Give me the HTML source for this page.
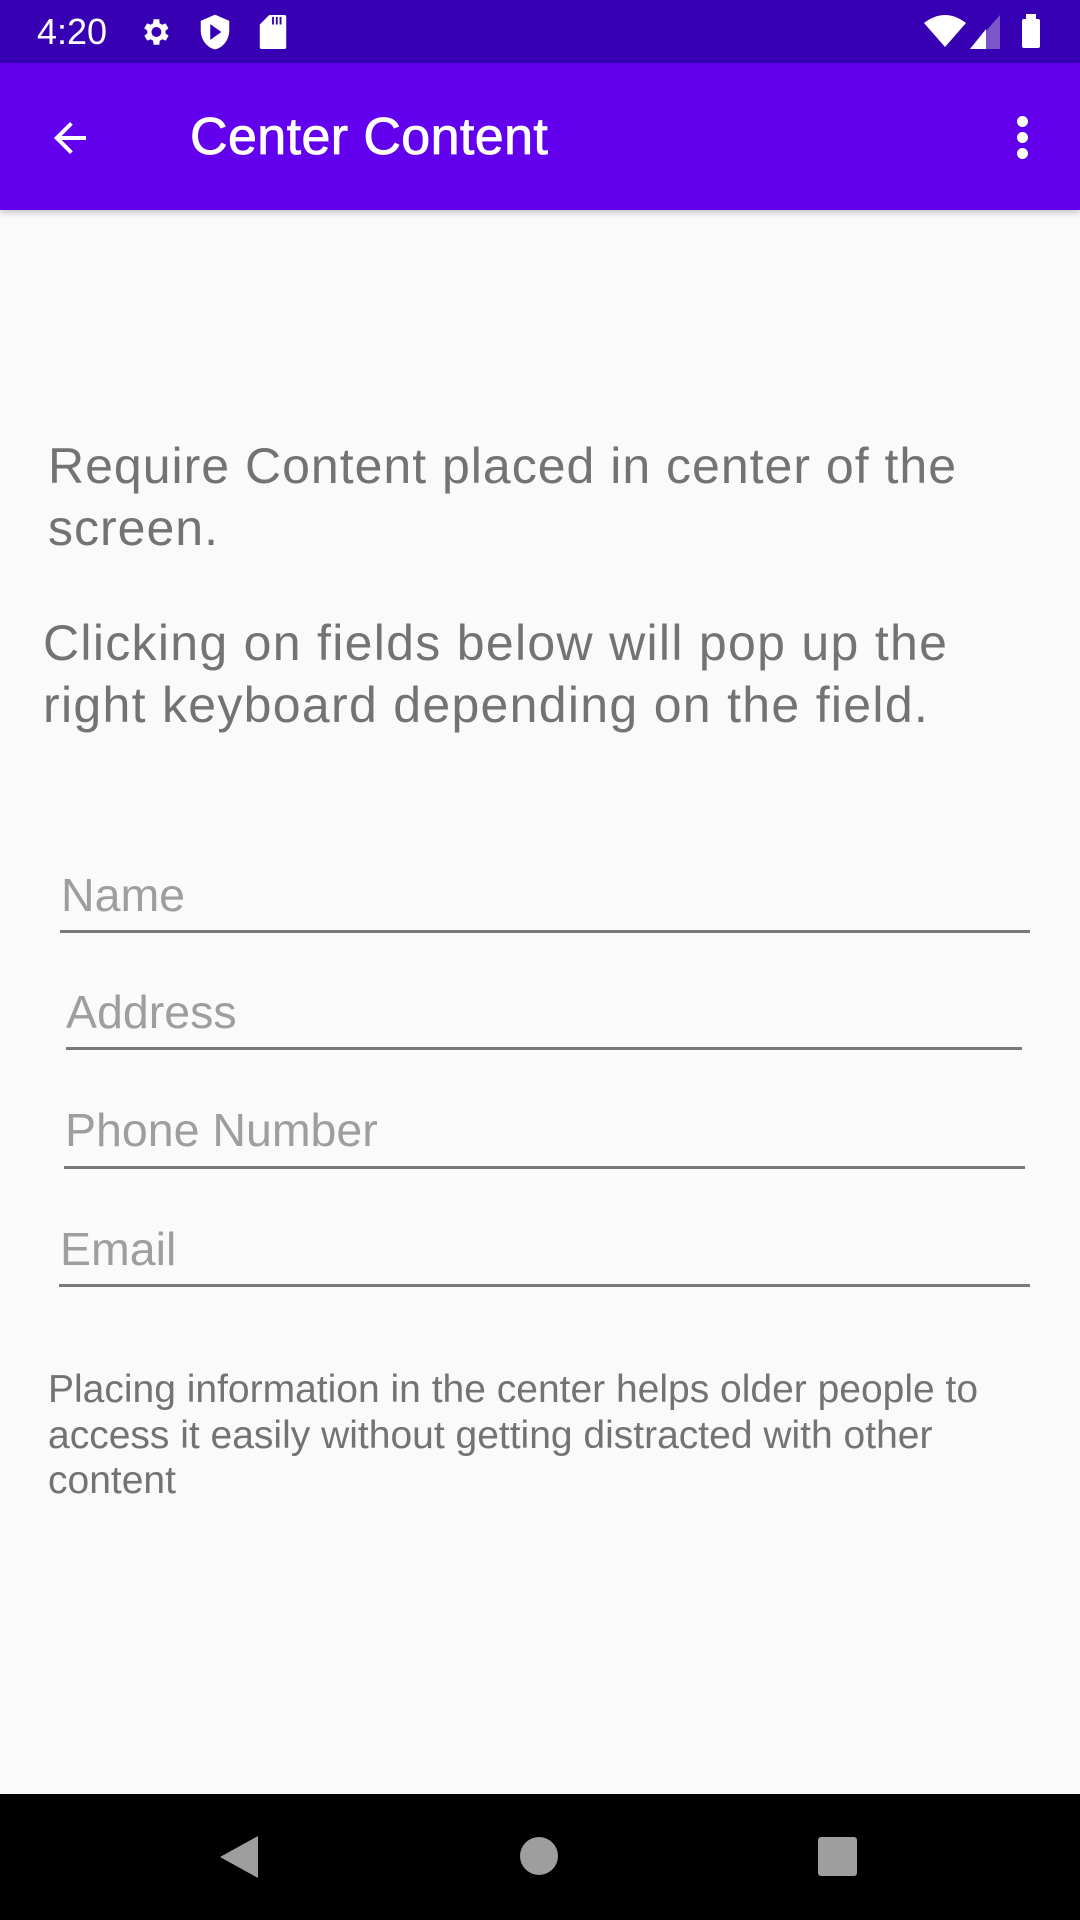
<!DOCTYPE html>
<html><head><meta charset="utf-8"><style>
*{margin:0;padding:0;box-sizing:border-box}
body{width:1080px;height:1920px;background:#fafafa;font-family:"Liberation Sans",Roboto,sans-serif;position:relative;overflow:hidden}
.abs{position:absolute}
.status{top:0;left:0;width:1080px;height:63px;background:#3700B3}
.bar{top:63px;left:0;width:1080px;height:147px;background:#6200EE;box-shadow:0 3px 6px rgba(0,0,0,.2)}
.t{color:#737373;white-space:nowrap}
.hint{color:#9e9e9e;font-size:46.5px;white-space:nowrap}
.line{height:3px;background:#7a7a7a}
.nav{top:1794px;left:0;width:1080px;height:126px;background:#000}
</style></head><body>
<div class="abs status"></div>
<div class="abs" style="left:37px;top:11px;color:#fff;font-size:36px;">4:20</div>
<svg class="abs" style="left:138px;top:15px" width="34" height="34" viewBox="0 0 24 24"><path fill="#fff" d="M19.4 13a7.5 7.5 0 000-2l2.1-1.6-2-3.5-2.5 1a7 7 0 00-1.7-1L15 3h-4l-.4 2.9a7 7 0 00-1.7 1l-2.5-1-2 3.5L6.6 11a7.5 7.5 0 000 2l-2.1 1.6 2 3.5 2.5-1a7 7 0 001.7 1L11 21h4l.4-2.9a7 7 0 001.7-1l2.5 1 2-3.5zM13 15.5a3.5 3.5 0 110-7 3.5 3.5 0 010 7z"/></svg>
<svg class="abs" style="left:199px;top:13px" width="32" height="38" viewBox="0 0 20 24"><path fill="#fff" d="M10 1L1 5v6c0 6 4 11 9 12 5-1 9-6 9-12V5z"/><path fill="#3700B3" d="M7 7v10l7-5z"/></svg>
<svg class="abs" style="left:259px;top:15px" width="28" height="34" viewBox="0 0 14 18"><path fill="#fff" d="M5 0h8a1 1 0 011 1v16a1 1 0 01-1 1H1a1 1 0 01-1-1V5z"/><path stroke="#3700B3" stroke-width="1" d="M7 1v4M9 1v4M11 1v4"/></svg>
<svg class="abs" style="left:924px;top:15px" width="42" height="32" viewBox="0 0 42 32"><path fill="#fff" d="M0 8Q21-8 42 8L21 32z"/></svg>
<svg class="abs" style="left:970px;top:15px" width="32" height="34" viewBox="0 0 32 34"><path fill="#7a55cc" d="M30 0v34H0z"/><path fill="#fff" d="M16 14v20H0z"/></svg>
<div class="abs" style="left:1022px;top:19px;width:18px;height:29px;background:#fff;border-radius:2px"></div>
<div class="abs" style="left:1026px;top:14px;width:10px;height:6px;background:#fff"></div>
<div class="abs bar"></div>
<svg class="abs" style="left:46px;top:114px" width="48" height="48" viewBox="0 0 24 24"><path fill="#fff" d="M20 11H7.8l5.6-5.6L12 4l-8 8 8 8 1.4-1.4L7.8 13H20z"/></svg>
<div class="abs" style="left:190px;top:107px;color:#fff;font-size:52px;letter-spacing:0.4px;-webkit-text-stroke:0.8px #fff">Center Content</div>
<div class="abs" style="left:1017px;top:116px;width:11px;height:11px;border-radius:50%;background:#fff"></div>
<div class="abs" style="left:1017px;top:132px;width:11px;height:11px;border-radius:50%;background:#fff"></div>
<div class="abs" style="left:1017px;top:148px;width:11px;height:11px;border-radius:50%;background:#fff"></div>

<div class="abs t" style="left:48px;top:435px;font-size:50px;line-height:62px;letter-spacing:1px">Require Content placed in center of the<br>screen.</div>
<div class="abs t" style="left:43px;top:612px;font-size:50px;line-height:62px;letter-spacing:1.3px">Clicking on fields below will pop up the<br>right keyboard depending on the field.</div>

<div class="abs hint" style="left:61px;top:868px">Name</div>
<div class="abs line" style="left:60px;top:930px;width:970px"></div>
<div class="abs hint" style="left:66px;top:985px">Address</div>
<div class="abs line" style="left:66px;top:1047px;width:956px"></div>
<div class="abs hint" style="left:65px;top:1103px">Phone Number</div>
<div class="abs line" style="left:64px;top:1166px;width:961px"></div>
<div class="abs hint" style="left:60px;top:1222px">Email</div>
<div class="abs line" style="left:59px;top:1284px;width:971px"></div>

<div class="abs t" style="left:48px;top:1367px;font-size:39px;line-height:45.5px">Placing information in the center helps older people to<br>access it easily without getting distracted with other<br>content</div>

<div class="abs nav"></div>
<svg class="abs" style="left:218px;top:1834px" width="42" height="46" viewBox="0 0 42 46"><path fill="#9e9e9e" d="M40 2v42L2 23z"/></svg>
<div class="abs" style="left:520px;top:1837px;width:38px;height:38px;border-radius:50%;background:#9e9e9e"></div>
<div class="abs" style="left:818px;top:1837px;width:39px;height:39px;border-radius:3px;background:#9e9e9e"></div>
</body></html>
